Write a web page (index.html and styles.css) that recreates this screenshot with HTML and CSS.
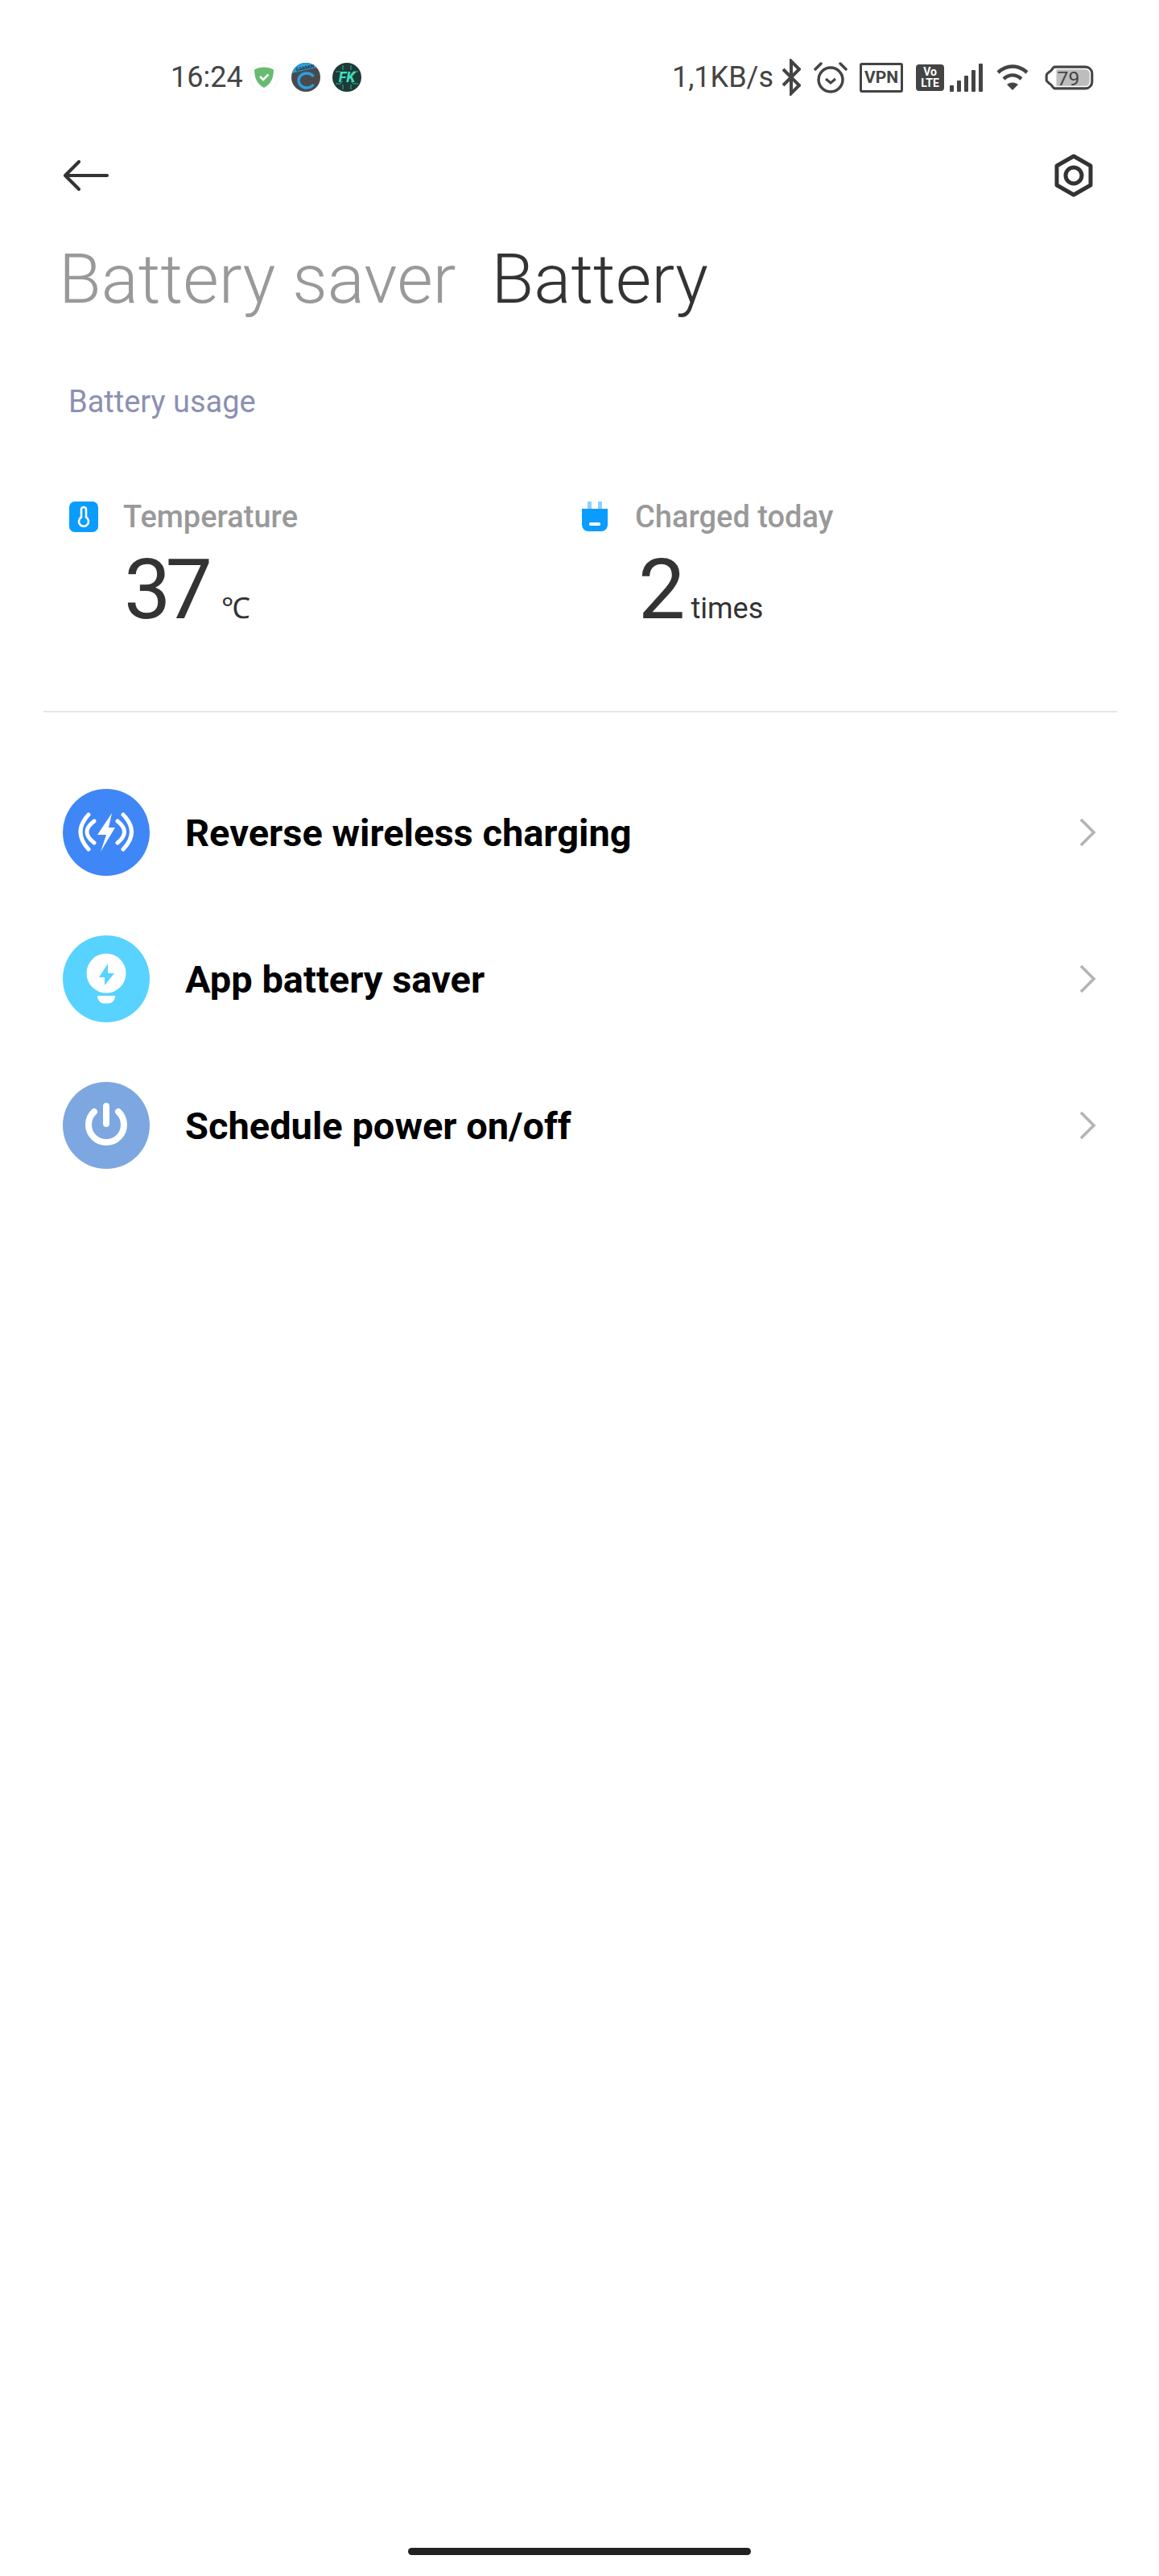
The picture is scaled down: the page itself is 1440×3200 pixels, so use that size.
FILE: index.html
```html
<!DOCTYPE html>
<html lang="en">
    <head>
        <meta charset="UTF-8">
        <meta name="viewport" content="width=device-width, initial-scale=1.0">
        <title>Battery</title>
        <link rel="stylesheet" href="styles.css">
    </head>
    <body>
        <div class="status-bar">
            <div class="status-left">
                <span class="clock">16:24</span>
                <svg class="notif shield" viewBox="0 0 36 36">
                    <circle cx="18" cy="18" r="17.500" fill="#fff" stroke="#f2f2f2"/>
                    <path d="M18 5.500c4.500 0 8 1.200 12 3 0 9-2.500 17.500-12 22.500C8.500 26 6 17.500 6 8.500c4-1.800 7.500-3 12-3z" fill="#68bc71"/>
                    <path d="M13 17l4 4 6.500-6.500" fill="none" stroke="#fff" stroke-width="2.600"/>
                </svg>
                <svg class="notif garmin" viewBox="0 0 36 36">
                    <defs><clipPath id="garminClip"><circle cx="18" cy="18" r="18"/></clipPath></defs>
                    <circle cx="18" cy="18" r="18" fill="#4a4a4c"/>
                    <path d="M0 0h36v5L0 13z" fill="#2a9fe0" clip-path="url(#garminClip)"/>
                    <text x="6" y="11" class="garmin-text" transform="rotate(-13 6 11)">GARMIN</text>
                    <path d="M27.500 17c-2-2.500-5-4-8.500-4-5.500 0-10 4-10 9s4.500 9 10 9c3.500 0 6.500-1.500 8.500-4" fill="none" stroke="#2a9fe0" stroke-width="3.500"/>
                </svg>
                <svg class="notif fk" viewBox="0 0 36 36">
                    <circle cx="18" cy="18" r="18" fill="#1d3a38"/>
                    <path d="M4 11h6l3 3M32 11h-6l-3 3M4 26h6l3-3M32 26h-6l-3-3M13 3v6M23 3v6M13 33v-6M23 33v-6" fill="none" stroke="#2fb39b" stroke-width="1"/>
                    <text x="18" y="24" text-anchor="middle" class="fk-text">FK</text>
                </svg>
            </div>
            <div class="status-right">
                <span class="speed">1,1KB/s</span>
                <svg class="bt" viewBox="0 0 24 46">
                    <path d="M2 13l20 20-10 10V3l10 10L2 33" fill="none" stroke="#444" stroke-width="4"/>
                </svg>
                <svg class="alarm" viewBox="0 0 42 42">
                    <circle cx="21" cy="24" r="15" fill="none" stroke="#444" stroke-width="3.500"/>
                    <path d="M15 23l6 5 6-5" fill="none" stroke="#444" stroke-width="3"/>
                    <path d="M2 11l7-7M40 11l-7-7" stroke="#444" stroke-width="3.500" stroke-linecap="round"/>
                </svg>
                <span class="vpn">VPN</span>
                <span class="volte"><span>Vo</span><span>LTE</span></span>
                <span class="signal">
                    <i class="bar bar1"></i><i class="bar bar2"></i><i class="bar bar3"></i><i class="bar bar4"></i><i class="bar bar5"></i>
                </span>
                <svg class="wifi" viewBox="0 0 42 34">
                    <path d="M3 11c11-10 25-10 36 0M10 19c7-6 15-6 22 0" fill="none" stroke="#444" stroke-width="4.500"/>
                    <path d="M21 33l-7-7c4-3.500 10-3.500 14 0z" fill="#444"/>
                </svg>
                <svg class="battery" viewBox="0 0 61 34">
                    <path d="M13 4h37c4.500 0 8 3.500 8 8v10c0 4.500-3.500 8-8 8H13c-2 0-3-3-4.500-4.500C7 24 3 22 3 20v-6c0-2 4-4 5.500-5.500C10 7 11 4 13 4z" fill="none" stroke="#444" stroke-width="3"/>
                    <path d="M15 7h35c3 0 5 2.500 5 5v10c0 2.500-2 5-5 5H15z" fill="#bdbdbd"/>
                    <text x="16" y="26" class="battery-num">79</text>
                </svg>
            </div>
        </div>

        <div class="nav">
            <svg class="back" viewBox="0 0 58 40">
                <path d="M55 20H4M20 3L3 20l17 17" fill="none" stroke="#333" stroke-width="4.200" stroke-linecap="round" stroke-linejoin="round"/>
            </svg>
            <svg class="gear" viewBox="0 0 52 56">
                <path d="M26 4l21 12v24L26 52 5 40V16z" fill="none" stroke="#333" stroke-width="5" stroke-linejoin="round"/>
                <circle cx="26" cy="28" r="10" fill="none" stroke="#333" stroke-width="5"/>
            </svg>
        </div>

        <div class="tabs">
            <span class="tab">Battery saver</span>
            <span class="tab active">Battery</span>
        </div>

        <div class="section-label">Battery usage</div>

        <div class="stats">
            <div class="stat">
                <div class="stat-head">
                    <svg class="stat-icon" viewBox="0 0 36 38">
                        <rect width="36" height="38" rx="7" fill="#0a9cff"/>
                        <path d="M18 7c-2 0-3 1.300-3 3v9.500a6 6 0 1 0 6 0V10c0-1.700-1-3-3-3z" fill="none" stroke="#fff" stroke-width="2.600"/>
                    </svg>
                    <span class="stat-title">Temperature</span>
                </div>
                <div class="stat-value"><span class="num">37</span><span class="unit-c">℃</span></div>
            </div>
            <div class="stat stat-right">
                <div class="stat-head">
                    <svg class="stat-icon plug" viewBox="0 0 32 38">
                        <rect x="7" y="0" width="5" height="9" fill="#8fd0ff"/>
                        <rect x="20" y="0" width="5" height="9" fill="#8fd0ff"/>
                        <path d="M0 9h32v20a8 8 0 0 1-8 8H8a8 8 0 0 1-8-8z" fill="#0a9cff"/>
                        <rect x="9" y="26" width="14" height="4" rx="1.500" fill="#fff"/>
                    </svg>
                    <span class="stat-title">Charged today</span>
                </div>
                <div class="stat-value"><span class="num">2</span><span class="unit">times</span></div>
            </div>
        </div>

        <div class="divider"></div>

        <div class="menu">
            <div class="menu-row">
                <svg class="menu-icon" viewBox="0 0 108 108">
                    <circle cx="54" cy="54" r="54" fill="#3f86f7"/>
                    <path d="M61 30L43 57h11l-7 21 18-30h-8z" fill="#fff"/>
                    <path d="M32 32Q12 53.500 32 75M39 40Q21 53.500 39 67M75 32Q96 53.500 75 75M68 40Q85 53.500 68 67" fill="none" stroke="#fff" stroke-width="5" stroke-linecap="round"/>
                </svg>
                <span class="menu-text">Reverse wireless charging</span>
                <svg class="chevron" viewBox="0 0 22 38">
                    <path d="M3 3l16 16L3 35" fill="none" stroke="#b4b4b4" stroke-width="3.600"/>
                </svg>
            </div>
            <div class="menu-row">
                <svg class="menu-icon" viewBox="0 0 108 108">
                    <circle cx="54" cy="54" r="54" fill="#58d3ff"/>
                    <circle cx="54" cy="47" r="24.500" fill="#fff"/>
                    <path d="M43 75h22c0 5.500-4 9.500-8 9.500h-6c-4 0-8-4-8-9.500z" fill="#fff"/>
                    <path d="M56 35L45 52h7v10l12-15h-8z" fill="#58d3ff"/>
                </svg>
                <span class="menu-text">App battery saver</span>
                <svg class="chevron" viewBox="0 0 22 38">
                    <path d="M3 3l16 16L3 35" fill="none" stroke="#b4b4b4" stroke-width="3.600"/>
                </svg>
            </div>
            <div class="menu-row">
                <svg class="menu-icon" viewBox="0 0 108 108">
                    <circle cx="54" cy="54" r="54" fill="#7da7e0"/>
                    <path d="M39 37a22 22 0 1 0 30 0" fill="none" stroke="#fff" stroke-width="8" stroke-linecap="round"/>
                    <path d="M54 30v22" stroke="#fff" stroke-width="8" stroke-linecap="round"/>
                </svg>
                <span class="menu-text">Schedule power on/off</span>
                <svg class="chevron" viewBox="0 0 22 38">
                    <path d="M3 3l16 16L3 35" fill="none" stroke="#b4b4b4" stroke-width="3.600"/>
                </svg>
            </div>
        </div>

        <div class="home-bar"></div>
    </body>
</html>
```

FILE: styles.css
```css
html, body {
    margin: 0;
    padding: 0;
}

body {
    width: 1440px;
    height: 3200px;
    background-color: #fff;
    font-family: Roboto, "Liberation Sans", sans-serif;
    display: flex;
    flex-direction: column;
    overflow: hidden;
}

/* status bar */
.status-bar {
    height: 64px;
    margin-top: 64px;
    padding: 0 80px 0 212px;
    display: flex;
    justify-content: space-between;
    align-items: center;
    color: #444;
}

.status-left, .status-right {
    display: flex;
    align-items: center;
}

.clock, .speed {
    font-size: 36px;
}

.notif {
    width: 36px;
    height: 36px;
}

.shield {
    margin-left: 8px;
}

.garmin {
    margin-left: 16px;
}

.fk {
    margin-left: 15px;
}

.garmin-text {
    font-size: 6px;
    font-weight: 700;
    fill: #333;
}

.fk-text {
    font-size: 18px;
    font-weight: 700;
    font-style: italic;
    fill: #3fe0c0;
}

.bt {
    width: 24px;
    height: 46px;
    margin-left: 10px;
}

.alarm {
    width: 42px;
    height: 42px;
    margin-left: 16px;
}

.vpn {
    margin-left: 15px;
    width: 54px;
    height: 37px;
    box-sizing: border-box;
    border: 3px solid #444;
    border-radius: 3px;
    font-size: 21px;
    font-weight: 700;
    line-height: 31px;
    text-align: center;
}

.volte {
    margin-left: 16px;
    width: 35px;
    height: 33px;
    background-color: #444;
    border-radius: 4px;
    color: #fff;
    font-size: 14px;
    font-weight: 700;
    line-height: 14px;
    display: flex;
    flex-direction: column;
    align-items: center;
    justify-content: center;
}

.signal {
    margin-left: 7px;
    height: 36px;
    display: flex;
    align-items: flex-end;
    gap: 4px;
}

.bar {
    width: 5px;
    border-radius: 1px;
    background-color: #444;
}

.bar1 { height: 8px; }
.bar2 { height: 14px; }
.bar3 { height: 20px; }
.bar4 { height: 27px; }
.bar5 { height: 35px; }

.wifi {
    width: 42px;
    height: 34px;
    margin-left: 16px;
}

.battery {
    width: 63px;
    height: 35px;
    margin-left: 18px;
}

.battery-num {
    font-size: 24px;
    fill: #444;
}

/* nav */
.nav {
    margin-top: 62px;
    height: 56px;
    padding: 0 80px 0 78px;
    display: flex;
    justify-content: space-between;
    align-items: center;
}

.back {
    width: 58px;
    height: 40px;
}

.gear {
    width: 52px;
    height: 56px;
}

/* title tabs */
.tabs {
    margin-top: 51px;
    padding-left: 73px;
    display: flex;
    gap: 44px;
    font-size: 86px;
    font-weight: 300;
    line-height: 100px;
    color: #999;
}

.tab.active {
    color: #333;
}

.section-label {
    margin-top: 80px;
    padding-left: 85px;
    font-size: 38px;
    line-height: 44px;
    color: #8c90b2;
}

/* stats */
.stats {
    margin-top: 99px;
    padding-left: 86px;
    display: flex;
}

.stat {
    width: 637px;
}

.stat-head {
    display: flex;
    align-items: center;
    height: 44px;
}

.stat-icon {
    width: 36px;
    height: 38px;
    margin-right: 31px;
}

.plug {
    width: 32px;
    margin-right: 34px;
}

.stat-title {
    font-size: 38px;
    font-weight: 500;
    color: #999;
}

.stat-value {
    margin-top: 14px;
    padding-left: 68px;
    color: #333;
    display: flex;
    align-items: baseline;
    line-height: 110px;
}

.stat-right .stat-value {
    padding-left: 70px;
}

.num {
    font-size: 104px;
    letter-spacing: -7px;
}

.unit-c {
    font-size: 36px;
    font-weight: 300;
    margin-left: 18px;
}

.unit {
    font-size: 36px;
    margin-left: 14px;
}

.divider {
    margin: 72px 52px 0 54px;
    height: 2px;
    background-color: #e5e5e5;
}

/* menu list */
.menu {
    margin-top: 58px;
}

.menu-row {
    height: 182px;
    padding: 0 78px;
    display: flex;
    align-items: center;
}

.menu-icon {
    width: 108px;
    height: 108px;
    margin-right: 44px;
}

.menu-text {
    flex: 1;
    font-size: 47px;
    font-weight: 700;
    color: #000;
}

.chevron {
    width: 22px;
    height: 38px;
}

.home-bar {
    margin: auto auto 26px;
    width: 426px;
    height: 9px;
    border-radius: 5px;
    background-color: #222;
}
```
